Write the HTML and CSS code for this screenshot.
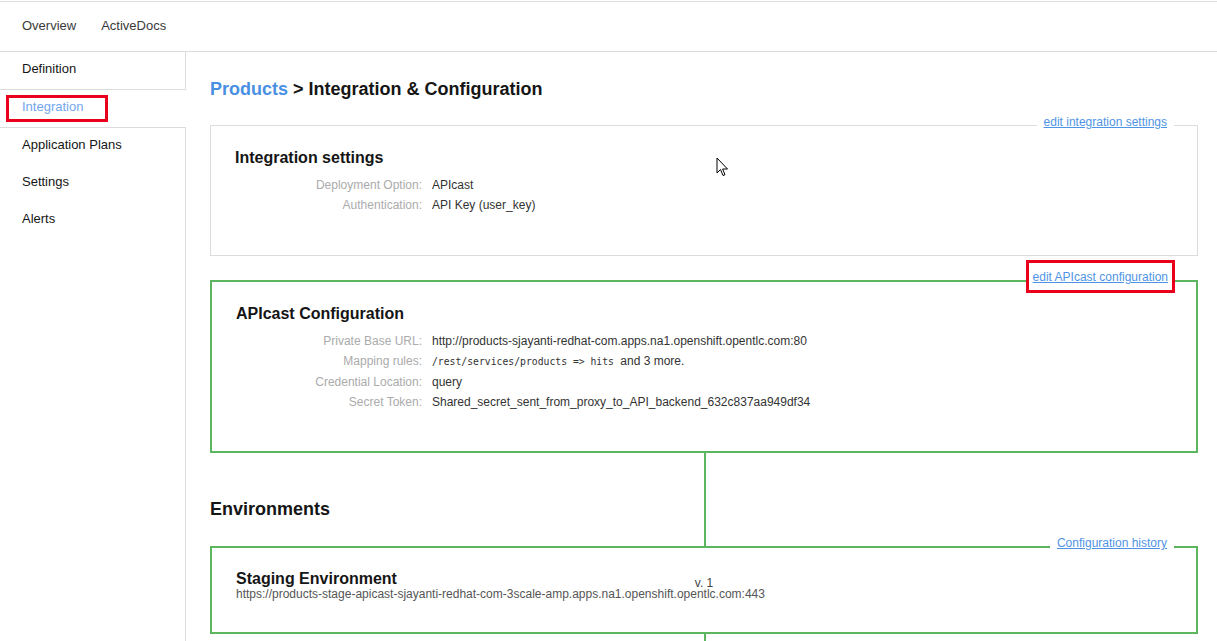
FILE: index.html
```html
<!DOCTYPE html>
<html lang="en">
<head>
<meta charset="utf-8">
<title>Integration &amp; Configuration</title>
<link rel="stylesheet" href="styles.css">
</head>
<body>
<header class="topnav">
  <a class="topnav-link" href="#">Overview</a>
  <a class="topnav-link" href="#">ActiveDocs</a>
</header>
<div class="layout">
  <nav class="sidebar">
    <ul class="side-list">
      <li class="side-item">Definition</li>
      <li class="side-item active">Integration<span class="highlight"></span></li>
      <li class="side-item">Application Plans</li>
      <li class="side-item">Settings</li>
      <li class="side-item">Alerts</li>
    </ul>
  </nav>
  <main class="content">
    <h1 class="page-title"><a href="#">Products</a> &gt; Integration &amp; Configuration</h1>

    <section class="panel panel-gray">
      <a class="legend" href="#">edit integration settings</a>
      <h2 class="panel-title">Integration settings</h2>
      <dl class="props">
        <dt>Deployment Option:</dt><dd>APIcast</dd>
        <dt>Authentication:</dt><dd>API Key (user_key)</dd>
      </dl>
    </section>

    <section class="panel panel-green">
      <a class="legend marked" href="#">edit APIcast configuration</a>
      <h2 class="panel-title">APIcast Configuration</h2>
      <dl class="props">
        <dt>Private Base URL:</dt><dd>http://products-sjayanti-redhat-com.apps.na1.openshift.opentlc.com:80</dd>
        <dt>Mapping rules:</dt><dd><code class="rule">/rest/services/products =&gt; hits</code> and 3 more.</dd>
        <dt>Credential Location:</dt><dd>query</dd>
        <dt>Secret Token:</dt><dd>Shared_secret_sent_from_proxy_to_API_backend_632c837aa949df34</dd>
      </dl>
    </section>

    <div class="connector">
      <h2 class="section-title">Environments</h2>
    </div>

    <section class="panel panel-green env">
      <a class="legend" href="#">Configuration history</a>
      <div class="env-head">
        <h3 class="env-title">Staging Environment</h3>
        <span class="env-version">v. 1</span>
        <span></span>
      </div>
      <div class="env-url">https://products-stage-apicast-sjayanti-redhat-com-3scale-amp.apps.na1.openshift.opentlc.com:443</div>
    </section>
    <div class="connector tail"></div>
  </main>
</div>
<svg class="cursor" width="13" height="21" viewBox="0 0 13 21" aria-hidden="true">
  <path d="M1 1 L1 16 L4.5 12.5 L7 18.5 L9 17.7 L6.6 12 L11.5 12 Z" fill="#fff" stroke="#000" stroke-width="1" stroke-linejoin="round"/>
</svg>
</body>
</html>
```

FILE: styles.css
```css
html, body {
  margin: 0;
  height: 100%;
  overflow: hidden;
}
body {
  font-family: "Liberation Sans", Arial, sans-serif;
  color: #151515;
  background: #fff;
  position: relative;
}

/* top navigation */
.topnav {
  margin-top: 1px;
  border-top: 1px solid #dcdcdc;
  border-bottom: 1px solid #dcdcdc;
  height: 49px;
  display: flex;
  align-items: flex-start;
  gap: 25px;
  padding-left: 22px;
}
.topnav-link {
  font-size: 13px;
  line-height: 16px;
  padding-top: 16px;
  color: #3a3a3a;
  text-decoration: none;
}

/* layout */
.layout {
  display: flex;
  min-height: calc(100vh - 52px);
}
.sidebar {
  width: 185px;
  flex: none;
  border-right: 1px solid #dcdcdc;
}
.side-list {
  list-style: none;
  margin: 0;
  padding: 0;
}
.side-item {
  padding: 8px 22px 12px;
  font-size: 13px;
  line-height: 17px;
  color: #151515;
}
.side-item.active {
  position: relative;
  border-top: 1px solid #dcdcdc;
  border-bottom: 1px solid #dcdcdc;
  margin-right: -1px;
  background: #fff;
  color: #72a6ee;
}
.highlight {
  position: absolute;
  left: 6px;
  top: 5px;
  width: 102px;
  height: 27px;
  box-sizing: border-box;
  border: 3px solid #e8001c;
}

/* main content */
.content {
  flex: 1;
  min-width: 0;
  padding: 26px 19px 0 24px;
}
.page-title {
  margin: 0 0 25px;
  font-size: 18px;
  line-height: 22px;
  font-weight: bold;
  color: #151515;
}
.page-title a {
  color: #4a90e2;
  text-decoration: none;
}

.panel {
  position: relative;
  padding: 22px 24px 39px;
}
.panel-gray {
  border: 1px solid #dcdcdc;
  padding-bottom: 40px;
  margin-bottom: 24px;
}
.panel-green {
  border: 2px solid #5cb55f;
}
.panel-title {
  margin: 0 0 8px;
  font-size: 16px;
  line-height: 19px;
  font-weight: bold;
}

.props {
  display: grid;
  grid-template-columns: 187px 1fr;
  column-gap: 10px;
  margin: 0;
  font-size: 12px;
  line-height: 20px;
}
.panel-green .props {
  grid-template-columns: 186px 1fr;
}
.props dt {
  text-align: right;
  color: #ababab;
}
.props dd {
  margin: 0;
  color: #333;
  white-space: nowrap;
}
.rule {
  font-family: "DejaVu Sans Mono", "Liberation Mono", monospace;
  font-size: 9.75px;
  margin-right: 3px;
  color: #333;
}

.legend {
  position: absolute;
  right: 23px;
  top: -11px;
  padding: 0 7px;
  background: #fff;
  font-size: 12px;
  line-height: 14px;
  color: #4f94e4;
  text-decoration: underline;
}
.panel-green .legend {
  right: 22px;
  top: -12px;
}
.panel-green .legend.marked {
  right: 21px;
  top: -22px;
  padding: 7px 4px 6px;
  border: 3px solid #e8001c;
}

/* pipeline connector */
.connector {
  padding: 45px 0 26px;
  background: linear-gradient(#5cb55f, #5cb55f) no-repeat;
  background-size: 2px 100%;
  background-position: calc(50% + 1px) 0;
}
.connector.tail {
  padding: 0;
  height: 8px;
}
.section-title {
  margin: 0;
  font-size: 18px;
  line-height: 22px;
  font-weight: bold;
}

/* environment */
.env {
  padding: 22px 24px 31px;
}
.env-head {
  display: grid;
  grid-template-columns: 1fr auto 1fr;
  align-items: end;
}
.env-title {
  margin: 0;
  font-size: 16px;
  line-height: 17px;
  font-weight: bold;
}
.env-version {
  font-size: 12px;
  line-height: 14px;
  color: #444;
  margin-bottom: -3px;
}
.env-url {
  font-size: 12px;
  line-height: 14px;
  color: #555;
  white-space: nowrap;
}

.cursor {
  position: absolute;
  left: 716px;
  top: 157px;
  pointer-events: none;
}
```
